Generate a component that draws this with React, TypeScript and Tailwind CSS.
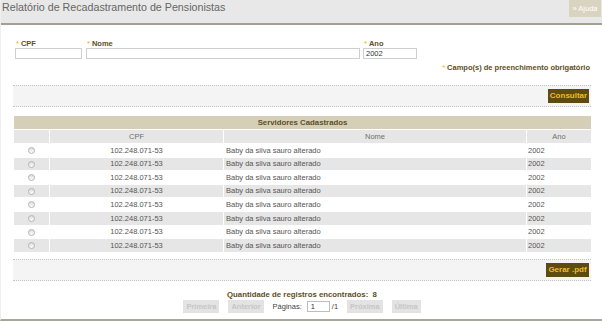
import React from 'react';

const rows = Array.from({ length: 8 }, () => ({
    cpf: '102.248.071-53',
    nome: 'Baby da silva sauro alterado',
    ano: '2002',
}));

function Req() {
    return <span className="text-[#f0b400] font-normal mr-[2px]">*</span>;
}

function Radio() {
    return (
        <span className="inline-block w-[7px] h-[7px] rounded-full border border-[#b4b4b4] bg-gradient-to-b from-[#dcdcdc] to-white align-middle" />
    );
}

function PagerButton({ label }: { label: string }) {
    return (
        <span className="h-[13px] px-[3px] flex items-center bg-[#e3e3e3] text-[#c6c6c6] font-bold text-[7.5px]">
            {label}
        </span>
    );
}

export default function App() {
    return (
        <div className="w-[602px] h-[324px] bg-white font-['Liberation_Sans',Arial,sans-serif] overflow-hidden">
            <div className="h-[321px] border-b-2 border-[#a6a6a0] border-l border-l-[#eeeeee]">
                {/* header */}
                <div className="h-[25px] bg-[#e8e8e8] border-b-2 border-[#a3a196] flex justify-between items-start">
                    <h1 className="pl-[1px] text-[10.7px] leading-[15px] text-[#666666]">
                        Relatório de Recadastramento de Pensionistas
                    </h1>
                    <span className="mr-[1px] h-[17px] w-[32px] bg-[#d9d4bf] text-white text-[7.5px] flex items-center justify-center">
                        » Ajuda
                    </span>
                </div>

                <div className="pl-[12px] pr-[11px]">
                    {/* form */}
                    <div className="mt-[14px] flex text-[7.5px] font-bold text-[#5e4e26]">
                        <div className="ml-[2px] w-[67px]">
                            <div className="h-[9px] leading-[9px] pl-[1px]"><Req />CPF</div>
                            <div className="h-[11px] border border-[#cfcfcf] bg-white" />
                        </div>
                        <div className="ml-[4px] w-[274px]">
                            <div className="h-[9px] leading-[9px] pl-[1px]"><Req />Nome</div>
                            <div className="h-[11px] border border-[#cfcfcf] bg-white" />
                        </div>
                        <div className="ml-[3px] w-[54px]">
                            <div className="h-[9px] leading-[9px] pl-[1px]"><Req />Ano</div>
                            <div className="h-[11px] border border-[#cfcfcf] bg-white pl-[2px] text-[7.5px] leading-[9px] font-normal text-[#333333]">
                                2002
                            </div>
                        </div>
                    </div>
                    <div className="mt-[4px] text-right pr-[1px] text-[7.5px] leading-[9px] font-bold text-[#5e4e26]">
                        <Req />Campo(s) de preenchimento obrigatório
                    </div>

                    {/* dotted box 1 */}
                    <div className="mt-[13px] h-[22px] bg-[#f4f4f4] border-y border-dotted border-[#c4c4c4] flex justify-end items-center pr-[2px]">
                        <span className="h-[14px] w-[41px] bg-[#5d4b12] text-[#eebd22] font-bold text-[8px] flex items-center justify-center">
                            Consultar
                        </span>
                    </div>

                    {/* table */}
                    <table className="mt-[8px] w-[579px] border-separate border-spacing-[1px] text-[7.5px] text-[#555555]">
                        <thead>
                            <tr>
                                <th colSpan={4} className="h-[13px] bg-[#d6cfb7] text-[#5e4e26] font-bold text-[7.8px] text-center p-0">
                                    Servidores Cadastrados
                                </th>
                            </tr>
                            <tr className="bg-[#e6e6e6] text-[#6e6e6e]">
                                <th className="h-[13px] w-[35px] p-0 font-normal" />
                                <th className="w-[173px] p-0 font-normal">CPF</th>
                                <th className="w-[302px] p-0 font-normal">Nome</th>
                                <th className="p-0 font-normal">Ano</th>
                            </tr>
                        </thead>
                        <tbody>
                            {rows.map((r, i) => (
                                <tr key={i} className={i % 2 === 1 ? 'bg-[#e6e6e6]' : 'bg-white'}>
                                    <td className="h-[12.6px] p-0 text-center leading-none"><Radio /></td>
                                    <td className="p-0 text-center">{r.cpf}</td>
                                    <td className="p-0 pl-[2px]">{r.nome}</td>
                                    <td className="p-0 pl-[1px]">{r.ano}</td>
                                </tr>
                            ))}
                        </tbody>
                    </table>

                    {/* dotted box 2 */}
                    <div className="mt-[6px] h-[22px] bg-[#f4f4f4] border-y border-dotted border-[#c4c4c4] flex justify-end items-center pr-[2px]">
                        <span className="h-[14px] w-[43px] bg-[#5d4b12] text-[#eebd22] font-bold text-[8px] flex items-center justify-center">
                            Gerar .pdf
                        </span>
                    </div>

                    {/* summary */}
                    <div className="mt-[9px] text-center text-[7.8px] leading-[9px] font-bold text-[#5e4e26]">
                        Quantidade de registros encontrados:&nbsp;&nbsp;8
                    </div>
                    <div className="mt-[1px] flex justify-center items-center gap-[9px] text-[7.5px] text-[#444444]">
                        <PagerButton label="Primeira" />
                        <PagerButton label="Anterior" />
                        <span className="flex items-center gap-[5px]">
                            Páginas:
                            <span className="h-[11px] w-[23px] border border-[#bdbdbd] bg-white pl-[3px] leading-[9px] text-[#333333]">1</span>
                            <span className="-ml-[3px]">/1</span>
                        </span>
                        <PagerButton label="Próxima" />
                        <PagerButton label="Última" />
                    </div>
                </div>
            </div>
        </div>
    );
}
